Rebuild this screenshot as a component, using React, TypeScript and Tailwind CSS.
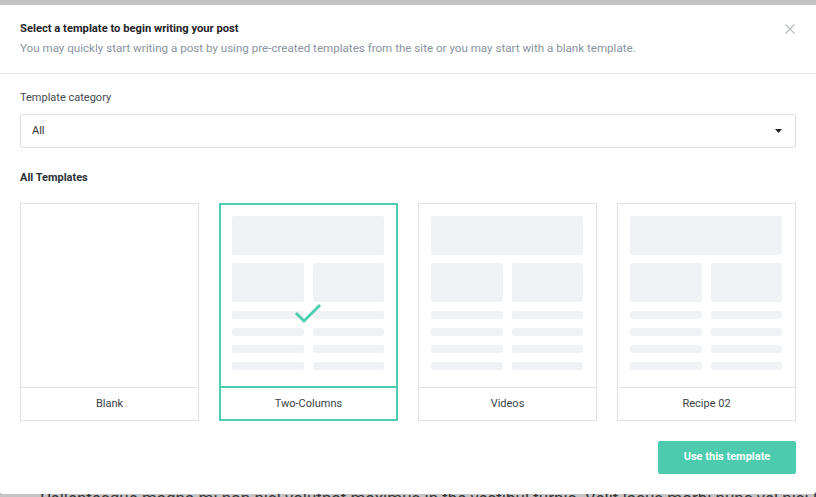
import React from "react";

const templates = [
  { id: 1, name: "Blank", blank: true },
  { id: 2, name: "Two-Columns", selected: true },
  { id: 3, name: "Videos" },
  { id: 4, name: "Recipe 02" },
];

const Preview = () => (
  <div className="flex flex-col pl-[12px] pr-[13px] pt-[12px]">
    <div className="h-[39px] rounded-[2px] bg-[#f1f2f5]" />
    <div className="mt-[8px] grid grid-cols-2 gap-[9px]">
      <div className="h-[39px] rounded-[2px] bg-[#f1f2f5]" />
      <div className="h-[39px] rounded-[2px] bg-[#f1f2f5]" />
    </div>
    {[0, 1, 2, 3].map((i) => (
      <div key={i} className="mt-[9px] grid grid-cols-2 gap-[9px]">
        <div className="h-[8px] rounded-[2px] bg-[#f1f2f5]" />
        <div className="h-[8px] rounded-[2px] bg-[#f1f2f5]" />
      </div>
    ))}
  </div>
);

const App = () => {
  return (
    <div
      className="relative h-[497px] w-[816px] overflow-hidden bg-[#c4c4c4]"
      style={{ fontFamily: "Roboto, 'Liberation Sans', sans-serif" }}
    >
      {/* page text behind the overlay */}
      <div className="absolute left-[40px] top-[487px] whitespace-nowrap text-[17px] leading-[22px] text-[#333]">
        Pellentesque magna mi non nisl volutpat maximus in the vestibul turpis. Velit lacus morbi nunc vel nisi lorem ipsum
      </div>

      <div className="relative z-10 mt-[5px] flex h-[489px] flex-col rounded-b-[3px] bg-white">
        {/* header */}
        <div className="relative border-b border-[#e4e7eb] px-5 pt-[16px] pb-[17px]">
          <h2 className="text-[11.2px] font-bold leading-[16px] text-[#1f2329]">
            Select a template to begin writing your post
          </h2>
          <p className="mt-[4px] text-[11.6px] leading-[15px] text-[#8a93a1]">
            You may quickly start writing a post by using pre-created templates from the site or you may start with a blank template.
          </p>
          <button className="absolute right-[21px] top-[19px] text-[#b5bac2]">
            <svg width="10" height="10" viewBox="0 0 10 10" fill="none" stroke="currentColor" strokeWidth="1.1">
              <path d="M0.5 0.5l9 9M9.5 0.5l-9 9" />
            </svg>
          </button>
        </div>

        <div className="px-5 pt-[16px]">
          <label className="block text-[11px] leading-[15px] text-[#444a52]">Template category</label>
          <div className="mt-[9px] flex h-[34px] items-center justify-between rounded-[2px] border border-[#dde2e8] px-[11px]">
            <span className="text-[11px] text-[#333]">All</span>
            <svg width="7" height="4" viewBox="0 0 7 4" className="mr-[2px]">
              <path d="M0 0h7L3.5 4z" fill="#222" />
            </svg>
          </div>

          <h3 className="mt-[22px] text-[11px] font-bold leading-[15px] text-[#2a2f36]">All Templates</h3>

          <div className="mt-[18px] grid grid-cols-4 gap-[20px]">
            {templates.map((t) => (
              <div
                key={t.id}
                className={
                  t.selected
                    ? "relative flex h-[218px] flex-col border border-[#4ecdb0] outline outline-1 -outline-offset-2 outline-[#4ecdb0]"
                    : "relative flex h-[218px] flex-col border border-[#dfe3e8]"
                }
              >
                <div className="flex-1">{!t.blank && <Preview />}</div>
                <div
                  className={
                    t.selected
                      ? "flex h-[33px] items-center justify-center border-t border-[#4ecdb0] shadow-[0_-1px_0_#4ecdb0] text-[11px] text-[#3a3f46]"
                      : "flex h-[33px] items-center justify-center border-t border-[#dfe3e8] text-[11px] text-[#3a3f46]"
                  }
                >
                  {t.name}
                </div>
                {t.selected && (
                  <svg
                    className="absolute left-[74px] top-[98px]"
                    width="28"
                    height="22"
                    viewBox="0 0 28 22"
                    fill="none"
                    stroke="#4ecdb0"
                    strokeWidth="3"
                  >
                    <path d="M2 11l8 8L26 3" />
                  </svg>
                )}
              </div>
            ))}
          </div>

          <div className="mt-[20px] flex justify-end">
            <button className="h-[33px] w-[138px] rounded-[2px] bg-[#4ccbaf] text-[11px] font-bold text-white">
              Use this template
            </button>
          </div>
        </div>
      </div>
    </div>
  );
};

export default App;
